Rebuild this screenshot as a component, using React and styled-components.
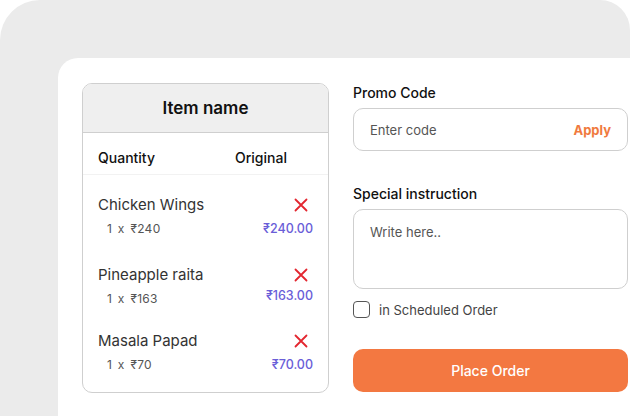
import React from 'react';
import styled, { createGlobalStyle } from 'styled-components';

const GlobalStyle = createGlobalStyle`
  html, body {
    margin: 0;
    padding: 0;
    background: #fff;
    overflow: hidden;
  }
  body {
    font-family: 'Inter', 'Open Sans', sans-serif;
  }
`;

// Styled Components
const Backdrop = styled.div`
  width: 630px;
  height: 416px;
  background: #ebebeb;
  border-radius: 40px 30px 0 0;
  padding: 58px 0 0 58px;
  box-sizing: border-box;
  overflow: hidden;
`;

const Card = styled.div`
  width: 600px;
  height: 400px;
  background: #fff;
  border-radius: 20px 0 0 0;
  padding: 25px 0 0 24px;
  box-sizing: border-box;
  display: flex;
  gap: 24px;
  align-items: flex-start;
`;

const Table = styled.div`
  width: 247px;
  height: 310px;
  box-sizing: border-box;
  border: 1px solid #cfcfcf;
  border-radius: 10px;
  overflow: hidden;
  display: flex;
  flex-direction: column;
`;

const TableHead = styled.div`
  height: 48px;
  background: #efefef;
  border-bottom: 1px solid #cfcfcf;
  display: flex;
  align-items: center;
  justify-content: center;
  font-size: 17px;
  font-weight: 600;
  color: #111;
`;

const ColumnRow = styled.div`
  display: grid;
  grid-template-columns: 137px 1fr;
  padding: 15px 15px 6px;
  line-height: 20px;
  font-size: 14px;
  font-weight: 500;
  color: #111;
  border-bottom: 1px solid #f2f2f2;
`;

const ItemList = styled.div`
  display: flex;
  flex-direction: column;
  padding: 19px 15px 0;
`;

const Item = styled.div`
  display: grid;
  grid-template-columns: 1fr auto;
  row-gap: 4px;
  margin-top: ${(p) => p.$gap || 0}px;
`;

const ItemName = styled.div`
  font-size: 15px;
  line-height: 22px;
  color: #333;
`;

const RemoveButton = styled.button`
  justify-self: end;
  width: 22px;
  height: 22px;
  margin-right: 1px;
  padding: 0;
  border: none;
  background: none;
  display: flex;
  align-items: center;
  justify-content: center;
  cursor: pointer;
`;

const ItemQty = styled.div`
  font-size: 12px;
  line-height: 18px;
  color: #555;
  padding-left: 9px;
  letter-spacing: 0.3px;
  word-spacing: 2px;
`;

const ItemPrice = styled.div`
  font-size: 12.5px;
  line-height: 18px;
  font-weight: 500;
  color: #6a5ed8;
  text-align: right;
  margin-top: ${(p) => p.$shift || 0}px;
`;

const Side = styled.div`
  width: 275px;
  display: flex;
  flex-direction: column;
`;

const Label = styled.div`
  font-size: 14px;
  line-height: 20px;
  font-weight: 500;
  color: #111;
  margin-bottom: 5px;
  margin-top: ${(p) => p.$top || 0}px;
`;

const InputBox = styled.div`
  height: 43px;
  box-sizing: border-box;
  border: 1px solid #cfcfcf;
  border-radius: 10px;
  display: flex;
  align-items: center;
  justify-content: space-between;
  padding: 0 16px;
`;

const Placeholder = styled.span`
  font-size: 13px;
  color: #555;
`;

const ApplyText = styled.span`
  font-size: 13px;
  font-weight: 700;
  color: #f07a3e;
`;

const TextArea = styled.div`
  height: 80px;
  box-sizing: border-box;
  border: 1px solid #cfcfcf;
  border-radius: 10px;
  padding: 14px 16px;
  font-size: 13px;
  line-height: 16px;
  color: #555;
`;

const CheckRow = styled.label`
  display: flex;
  align-items: center;
  gap: 9px;
  margin-top: 12px;
  font-size: 13px;
  color: #444;
`;

const CheckBox = styled.span`
  width: 17px;
  height: 17px;
  box-sizing: border-box;
  border: 1.5px solid #555;
  border-radius: 4px;
`;

const PlaceButton = styled.button`
  margin-top: 31px;
  height: 43px;
  border: none;
  border-radius: 10px;
  background: #f37841;
  color: #fff;
  font-family: inherit;
  font-size: 14px;
  font-weight: 500;
  cursor: pointer;
`;

const CrossIcon = () => (
  <svg width="14" height="14" viewBox="0 0 14 14">
    <path d="M1.5 1.5 L12.5 12.5 M12.5 1.5 L1.5 12.5" stroke="#e3262f" strokeWidth="1.8" strokeLinecap="round" />
  </svg>
);

const items = [
  { name: 'Chicken Wings', qty: '1 x  ₹240', price: '₹240.00', gap: 0, shift: 0 },
  { name: 'Pineapple raita', qty: '1 x  ₹163', price: '₹163.00', gap: 26, shift: -3 },
  { name: 'Masala Papad', qty: '1 x  ₹70', price: '₹70.00', gap: 22, shift: 0 },
];

const App = () => {
  return (
    <Backdrop>
      <GlobalStyle />
      <Card>
        <Table>
          <TableHead>Item name</TableHead>
          <ColumnRow>
            <span>Quantity</span>
            <span>Original</span>
          </ColumnRow>
          <ItemList>
            {items.map((it) => (
              <Item key={it.name} $gap={it.gap}>
                <ItemName>{it.name}</ItemName>
                <RemoveButton aria-label="remove">
                  <CrossIcon />
                </RemoveButton>
                <ItemQty>{it.qty}</ItemQty>
                <ItemPrice $shift={it.shift}>{it.price}</ItemPrice>
              </Item>
            ))}
          </ItemList>
        </Table>

        <Side>
          <Label>Promo Code</Label>
          <InputBox>
            <Placeholder>Enter code</Placeholder>
            <ApplyText>Apply</ApplyText>
          </InputBox>

          <Label $top={33}>Special instruction</Label>
          <TextArea>Write here..</TextArea>

          <CheckRow>
            <CheckBox />
            in Scheduled Order
          </CheckRow>

          <PlaceButton>Place Order</PlaceButton>
        </Side>
      </Card>
    </Backdrop>
  );
};

export default App;
